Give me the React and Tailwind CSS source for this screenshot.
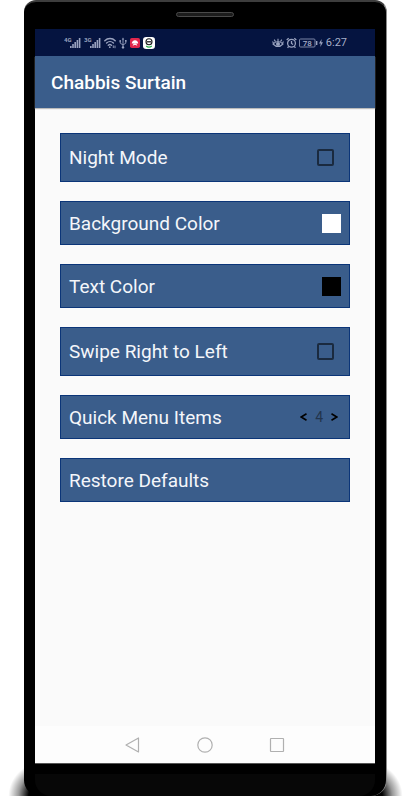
import React, { useState } from "react";

function SignalIcon({ label }) {
  return (
    <svg width="17" height="12" viewBox="0 0 17 12" fill="currentColor" className="text-[#9aa3bf]">
      <text x="0" y="5" fontSize="6" fontWeight="700" fontFamily="Roboto, sans-serif">{label}</text>
      <rect x="6" y="9" width="1.6" height="2" />
      <rect x="8.2" y="7" width="1.6" height="4" />
      <rect x="10.4" y="5" width="1.6" height="6" />
      <rect x="12.6" y="3" width="1.6" height="8" />
      <rect x="14.8" y="1" width="1.6" height="10" />
    </svg>
  );
}

function WifiIcon() {
  return (
    <svg width="12" height="12" viewBox="0 0 12 12" fill="none" stroke="#9aa3bf" strokeWidth="1.4" strokeLinecap="round">
      <path d="M.8 3.7a7.4 7.4 0 0 1 10.4 0M2.6 6a4.9 4.9 0 0 1 6.8 0M4.3 8.200a2.500 2.500 0 0 1 3.200 0" />
      <circle cx="5.8" cy="10.2" r=".9" fill="#9aa3bf" stroke="none" />
      <path d="M9.3 8.8v1.8M11 9v1.8" strokeWidth=".9" />
    </svg>
  );
}

function UsbIcon() {
  return (
    <svg width="8" height="12" viewBox="0 0 8 12" fill="none" stroke="#9aa3bf" strokeWidth=".9">
      <path d="M4 2v8M1.2 4.5v1.6L4 8l2.8-1.8V4" />
      <path d="M4 .4 2.8 2.4h2.4z" fill="#9aa3bf" stroke="none" />
      <circle cx="4" cy="10.4" r="1.2" fill="#9aa3bf" stroke="none" />
      <circle cx="1.2" cy="4" r=".9" fill="#9aa3bf" stroke="none" />
      <rect x="6" y="3" width="1.6" height="1.6" fill="#9aa3bf" stroke="none" />
    </svg>
  );
}

function RedAppIcon() {
  return (
    <svg width="10" height="10" viewBox="0 0 10 10">
      <rect width="10" height="10" rx="1.8" fill="#e0274c" />
      <path d="M1.8 5.500C1.800 3.500 3.200 2.200 5 2.200s3.200 1.300 3.200 3.300z" fill="#fff" />
      <path d="M2.600 7.800 3.800 5.500h2.400l1.200 2.300-2.400-1z" fill="#fff" />
    </svg>
  );
}

function FaceAppIcon() {
  return (
    <svg width="12" height="12" viewBox="0 0 12 12">
      <rect width="12" height="12" rx="3.2" fill="#fff" />
      <circle cx="6" cy="4.8" r="3" fill="none" stroke="#1c1c1c" strokeWidth="1.1" />
      <path d="M3.8 4.8h4.4" stroke="#1c1c1c" strokeWidth="1.3" />
      <path d="M3.2 9Q6 11.2 8.8 9" fill="none" stroke="#28b04a" strokeWidth="1.3" />
    </svg>
  );
}

function EyeIcon() {
  return (
    <svg width="12" height="12" viewBox="0 0 12 12" fill="none" stroke="#9aa3bf" strokeWidth="1.1">
      <path d="M1 7Q6 2 11 7Q6 12 1 7z" />
      <circle cx="6" cy="7" r="2" fill="#9aa3bf" stroke="none" />
      <path d="M6 4V1.8M3.500 4.600 2.200 2.600M8.500 4.600l1.300-2M1.600 5.800.4 4.600M10.400 5.800l1.200-1.200" />
    </svg>
  );
}

function AlarmIcon() {
  return (
    <svg width="11" height="12" viewBox="0 0 11 12" fill="none" stroke="#9aa3bf" strokeWidth="1.3">
      <circle cx="5.5" cy="6.3" r="3.9" />
      <path d="M5.500 4v2.500l1.600 1M.7 3 2.700 1.200M10.300 3l-2-1.800M2.600 9.400l-1 1.400M8.400 9.400l1 1.400" />
    </svg>
  );
}

function BatteryIcon() {
  return (
    <svg width="25" height="10" viewBox="0 0 25 10">
      <rect x=".5" y="1" width="15.5" height="8" rx="1" fill="none" stroke="#7a84a5" />
      <text x="8.300" y="8" fontSize="8" fontWeight="500" textAnchor="middle" fill="#a7afc8" fontFamily="Roboto, sans-serif">78</text>
      <rect x="17" y="3" width="1.4" height="4" fill="#9aa3bf" />
      <path d="M22.600 1 20 5.600h1.700L21.300 9l2.700-4.700h-1.700z" fill="#9aa3bf" />
    </svg>
  );
}

function StatusBar() {
  return (
    <div className="flex h-[27px] items-center justify-between bg-[#051440] pr-7 pl-[29px]">
      <div className="flex items-center gap-[3px]">
        <SignalIcon label="4G" />
        <SignalIcon label="3G" />
        <WifiIcon />
        <UsbIcon />
        <RedAppIcon />
        <FaceAppIcon />
      </div>
      <div className="flex items-center gap-0.5 text-[#a7afc8]">
        <EyeIcon />
        <AlarmIcon />
        <BatteryIcon />
        <span className="text-[11px] leading-3">6:27</span>
      </div>
    </div>
  );
}

function Row({ tall, children }) {
  return (
    <div className={`flex items-center justify-between border border-[#0b3578] bg-[#3a5d8b] px-2 text-[19px] text-[#f4f6fa] ${tall ? "h-[49px]" : "h-11"}`}>
      {children}
    </div>
  );
}

function CheckRow({ id, label }) {
  return (
    <Row tall>
      <label htmlFor={id} className="pt-0.5">{label}</label>
      <input
        id={id}
        type="checkbox"
        className="mr-[7px] size-[17px] appearance-none rounded-xs border-2 border-[#1a2a3f] checked:bg-[#1a2a3f]"
      />
    </Row>
  );
}

function NavBar() {
  return (
    <nav className="flex h-[37px] items-center justify-center gap-14 bg-[#fdfdfd] text-[#b0b0b0]">
      <button aria-label="Back">
        <svg width="16" height="16" viewBox="0 0 16 16" fill="none" stroke="currentColor" strokeWidth="1.2" strokeLinejoin="round">
          <path d="M13.5 1v14L1 8z" />
        </svg>
      </button>
      <button aria-label="Home">
        <svg width="16" height="16" viewBox="0 0 16 16" fill="none" stroke="currentColor" strokeWidth="1.2">
          <circle cx="8" cy="8" r="7.2" />
        </svg>
      </button>
      <button aria-label="Recent apps">
        <svg width="16" height="16" viewBox="0 0 16 16" fill="none" stroke="currentColor" strokeWidth="1.2">
          <rect x="1.5" y="1.5" width="13" height="13" rx=".5" />
        </svg>
      </button>
    </nav>
  );
}

export default function App() {
  const [items, setItems] = useState(4);

  return (
    <div className="flex min-h-screen flex-col bg-white pr-[23px] pb-1 pl-6 font-[Roboto,sans-serif]">
      <div className="relative flex flex-1 flex-col">
        {/* floor shadow on both sides of the phone */}
        <div className="absolute bottom-0 -left-4 h-9 w-10 bg-[radial-gradient(ellipse_at_bottom_right,#000_34%,#0006_52%,transparent_70%)]" />
        <div className="absolute -right-4 bottom-0 h-9 w-10 bg-[radial-gradient(ellipse_at_bottom_left,#000_34%,#0006_52%,transparent_70%)]" />

        <div className="relative flex flex-1 flex-col rounded-t-xl rounded-b-2xl border-t-2 border-r border-t-[#3d3d3d] border-r-[#8a8a8a] bg-black px-[11px]">
          <div className="flex h-[27px] justify-center pt-[10px]">
            <div className="h-[5px] w-[58px] rounded-full border border-[#4a4a4a] bg-[#1c1c1c]" />
          </div>

          <div className="flex flex-1 flex-col bg-[#fafafa]">
            <StatusBar />
            <header className="flex h-[52px] items-center bg-[#3a5d8b] px-4 pt-0.5 shadow-[0_1px_1px_#bbb]">
              <h1 className="text-[19px] font-medium text-white">Chabbis Surtain</h1>
            </header>

            <main className="flex flex-1 flex-col gap-[19px] px-[25px] pt-[25px]">
              <CheckRow id="night" label="Night Mode" />
              <Row>
                <span className="pt-0.5">Background Color</span>
                <button aria-label="Pick background color" className="size-[19px] bg-white" />
              </Row>
              <Row>
                <span className="pt-0.5">Text Color</span>
                <button aria-label="Pick text color" className="size-[19px] bg-black" />
              </Row>
              <CheckRow id="swipe" label="Swipe Right to Left" />
              <Row>
                <span className="pt-0.5">Quick Menu Items</span>
                <div className="mr-[3px] flex items-center gap-2 text-[#22344d]">
                  <button aria-label="Fewer items" onClick={() => setItems(items - 1)}>
                    <svg width="7" height="8" viewBox="0 0 7 8" fill="none" stroke="#000" strokeWidth="1.6">
                      <path d="M6.5.8 1.2 4l5.3 3.2" />
                    </svg>
                  </button>
                  <span className="text-sm">{items}</span>
                  <button aria-label="More items" onClick={() => setItems(items + 1)}>
                    <svg width="7" height="8" viewBox="0 0 7 8" fill="none" stroke="#000" strokeWidth="1.6">
                      <path d="M.5.8 5.8 4 .5 7.2" />
                    </svg>
                  </button>
                </div>
              </Row>
              <button className="h-11 border border-[#0b3578] bg-[#3a5d8b] px-2 pt-0.5 text-left text-[19px] text-[#f4f6fa]">
                Restore Defaults
              </button>
            </main>

            <NavBar />
          </div>

          <div className="h-[11px] border-t border-[#555]" />
          <div className="h-[22px] rounded-b-2xl bg-[#070707]" />
        </div>
      </div>
    </div>
  );
}
